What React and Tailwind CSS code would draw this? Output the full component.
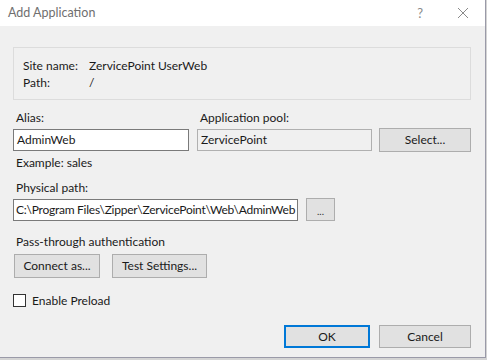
export default function App() {
  const font = { fontFamily: 'Lato, "Noto Sans", sans-serif' };
  return (
    <div className="w-[487px] h-[360px] bg-[#d4d4d4] overflow-hidden" style={font}>
      <div className="w-[486px] h-[358px] bg-[#f0f0f0] border-r border-b border-[#9a9aa8] flex flex-col text-[12px] text-[#1a1a1a] leading-[16px]">
        {/* Title bar */}
        <div className="h-[26px] bg-white flex items-center pl-[8px] pr-[16px] shrink-0">
          <span className="text-[#6f6f6f] text-[12.5px] flex-1">Add Application</span>
          <span className="text-[#8a8a8a] text-[13px] mr-[34px]">?</span>
          <svg width="12" height="12" viewBox="0 0 12 12" className="text-[#8a8a8a]">
            <path d="M1 1 L11 11 M11 1 L1 11" stroke="currentColor" strokeWidth="1" fill="none" />
          </svg>
        </div>

        <div className="pl-[13px] pr-[14px] pt-[21px] flex flex-col">
          {/* Site info */}
          <div className="h-[53px] border border-[#dcdcdc] pl-[9px] pt-[9px] flex flex-col">
            <div className="flex h-[17px] items-center">
              <span className="w-[66px]">Site name:</span>
              <span>ZervicePoint UserWeb</span>
            </div>
            <div className="flex h-[17px] items-center">
              <span className="w-[66px]">Path:</span>
              <span>/</span>
            </div>
          </div>

          {/* Alias / pool */}
          <div className="flex mt-[10px]">
            <div className="w-[176px] flex flex-col">
              <span className="pl-[3px] h-[16px]">Alias:</span>
              <div className="mt-[3px] h-[22px] bg-white border border-[#7a7a7a] flex items-center pl-[3px]">
                AdminWeb
              </div>
            </div>
            <div className="ml-[8px] w-[175px] flex flex-col">
              <span className="pl-[3px] h-[16px]">Application pool:</span>
              <div className="mt-[3px] h-[22px] bg-[#f0f0f0] border border-[#b0b0b0] flex items-center pl-[3px]">
                ZervicePoint
              </div>
            </div>
            <div className="ml-[7px] flex flex-col">
              <div className="h-[18px]" />
              <button className="w-[92px] h-[24px] bg-[#e1e1e1] border border-[#adadad] text-[12px]">
                Select...
              </button>
            </div>
          </div>

          <span className="pl-[3px] mt-[3px] h-[16px]">Example: sales</span>

          {/* Physical path */}
          <span className="pl-[3px] mt-[9px] h-[16px]">Physical path:</span>
          <div className="flex items-start mt-[2px]">
            <div className="mt-[1px] w-[285px] h-[22px] bg-white border border-[#7a7a7a] flex items-center pl-[2px] whitespace-nowrap overflow-hidden tracking-[-0.25px]">
              C:\Program Files\Zipper\ZervicePoint\Web\AdminWeb
            </div>
            <button className="ml-[8px] w-[29px] h-[23px] bg-[#e1e1e1] border border-[#adadad] text-[10px] text-[#333] pt-[2px]">
              ...
            </button>
          </div>

          {/* Auth */}
          <span className="pl-[3px] mt-[13px] h-[16px]">Pass-through authentication</span>
          <div className="flex mt-[4px] pl-[1px] gap-[12px]">
            <button className="w-[86px] h-[24px] bg-[#e1e1e1] border border-[#adadad] text-[12px]">
              Connect as...
            </button>
            <button className="w-[95px] h-[24px] bg-[#e1e1e1] border border-[#adadad] text-[12px]">
              Test Settings...
            </button>
          </div>

          {/* Preload */}
          <label className="flex items-center mt-[16px] h-[13px]">
            <span className="w-[13px] h-[13px] bg-white border border-[#333]" />
            <span className="ml-[6px]">Enable Preload</span>
          </label>

          {/* Footer buttons */}
          <div className="flex justify-end mt-[18px] gap-[9px]">
            <button className="w-[86px] h-[23px] bg-[#e1e1e1] border border-[#0078d7] text-[12px] shadow-[inset_0_0_0_1px_#0078d7]">
              OK
            </button>
            <button className="w-[92px] h-[23px] bg-[#e1e1e1] border border-[#adadad] text-[12px]">
              Cancel
            </button>
          </div>
        </div>
      </div>
    </div>
  );
}
